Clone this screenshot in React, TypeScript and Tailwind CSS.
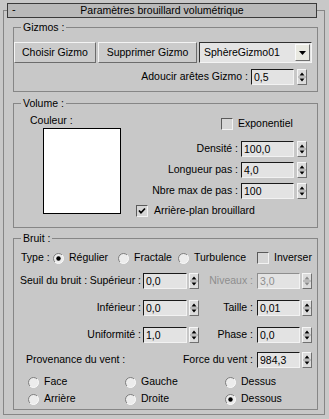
import React from 'react';

function Arrows({ disabled }: { disabled?: boolean }) {
  const c = disabled ? '#8a8a8a' : '#000';
  return (
    <div className="w-[10px] h-[16px] shrink-0 bg-[#dcdcdc] border border-t-[#f6f6f6] border-l-[#f6f6f6] border-b-[#707070] border-r-[#707070] flex">
      <svg width="8" height="14" viewBox="0 0 8 14">
        <path d="M4 2.5 L6.5 5.5 L1.5 5.5 Z" fill={c} />
        <path d="M0 7 H8" stroke="#9a9a9a" strokeWidth="1" />
        <path d="M1.5 8.5 L6.5 8.5 L4 11.5 Z" fill={c} />
      </svg>
    </div>
  );
}

function Spinner({ value, w, gap, disabled }: { value: string; w: string; gap: string; disabled?: boolean }) {
  return (
    <div className={`flex items-center shrink-0 ${gap}`}>
      <div
        className={`${w} h-[16px] border bg-[#e3e3e3] pl-[2px] leading-[14px] border-b-[#f2f2f2] border-r-[#f2f2f2] ${
          disabled ? 'text-[#8e8e8e] border-t-[#8e8e8e] border-l-[#8e8e8e]' : 'border-t-[#1a1a1a] border-l-[#1a1a1a]'
        }`}
      >
        {value}
      </div>
      <Arrows disabled={disabled} />
    </div>
  );
}

function Check({ checked }: { checked?: boolean }) {
  return (
    <div className="w-[12px] h-[12px] shrink-0 bg-[#d6d6d6] border border-t-[#5a5a5a] border-l-[#5a5a5a] border-b-[#f2f2f2] border-r-[#f2f2f2] flex items-center justify-center">
      {checked && (
        <svg width="8" height="8" viewBox="0 0 8 8">
          <path d="M1 3.5 L3 5.8 L7 1.5" stroke="#000" strokeWidth="1.7" fill="none" />
        </svg>
      )}
    </div>
  );
}

function Radio({ checked }: { checked?: boolean }) {
  return (
    <svg width="11" height="11" viewBox="0 0 11 11" className="shrink-0">
      <circle cx="5.5" cy="5.5" r="5" fill="#ececec" />
      <path d="M1.96 9.04 A5 5 0 0 1 9.04 1.96" stroke="#7c7c7c" fill="none" />
      <path d="M9.04 1.96 A5 5 0 0 1 1.96 9.04" stroke="#fafafa" fill="none" />
      {checked && <circle cx="5.5" cy="5.5" r="2.2" fill="#000" />}
    </svg>
  );
}

function RadioOpt({ label, checked, w }: { label: string; checked?: boolean; w: string }) {
  return (
    <div className={`${w} flex items-center gap-[5px] shrink-0`}>
      <Radio checked={checked} />
      <span>{label}</span>
    </div>
  );
}

function Btn({ label, w }: { label: string; w: string }) {
  return (
    <div className={`${w} h-[21px] bg-[#cbcbcb] border border-t-[#f4f4f4] border-l-[#f4f4f4] border-b-[#6c6c6c] border-r-[#6c6c6c] flex items-center justify-center`}>
      {label}
    </div>
  );
}

export default function App() {
  return (
    <div className="w-[329px] h-[419px] overflow-hidden bg-[#c8c8c8] text-[10.5px] text-black font-['Liberation_Sans',Arial,sans-serif] pt-[10px]">
      <div className="ml-[3px] w-[322px] h-[405px] border border-[#868686]">
        {/* rollout title */}
        <div className="relative ml-[3px] -mt-[8px] w-[310px] h-[15px] border border-[#3a3a3a] bg-[#b9b9b9] flex items-center justify-center leading-[13px]">
          <span className="absolute left-[4px] top-0 leading-[11px] text-[11px]">-</span>
          Paramètres brouillard volumétrique
        </div>

        {/* Gizmos */}
        <fieldset className="ml-[9px] mt-[3px] w-[305px] border border-[#868686] pb-[6px]">
          <legend className="ml-[7px] px-[2px] leading-[12px]">Gizmos :</legend>
          <div className="flex mt-[9px] gap-[2px]">
            <Btn label="Choisir Gizmo" w="w-[82px]" />
            <Btn label="Supprimer Gizmo" w="w-[99px]" />
            <div className="w-[113px] h-[21px] bg-[#e4e4e4] border border-t-[#303030] border-l-[#303030] border-b-[#f4f4f4] border-r-[#f4f4f4] flex items-center">
              <span className="flex-1 pl-[4px]">SphèreGizmo01</span>
              <div className="w-[15px] h-[17px] mr-[1px] bg-[#e9e9e1] border border-t-[#fafafa] border-l-[#fafafa] border-b-[#707070] border-r-[#707070] flex items-center justify-center">
                <svg width="7" height="4" viewBox="0 0 7 4">
                  <path d="M0 0 H7 L3.5 4 Z" fill="#000" />
                </svg>
              </div>
            </div>
          </div>
          <div className="flex justify-end items-center mt-[6px] pr-[10px] gap-[3px]">
            <span>Adoucir arêtes Gizmo :</span>
            <Spinner value="0,5" w="w-[43px]" gap="gap-[3px]" />
          </div>
        </fieldset>

        {/* Volume */}
        <fieldset className="ml-[9px] mt-[5px] w-[305px] border border-[#868686] pb-[10px]">
          <legend className="ml-[7px] px-[2px] leading-[12px]">Volume :</legend>
          <div className="flex">
            <div className="w-[122px] shrink-0 pl-[16px] pt-[5px]">
              <div className="leading-[12px]">Couleur :</div>
              <div className="ml-[13px] mt-[2px] w-[78px] h-[86px] bg-white border border-black" />
            </div>
            <div className="flex-1 pr-[10px]">
              <div className="mt-[9px] ml-[85px] h-[12px] flex items-center gap-[5px]">
                <Check />
                <span>Exponentiel</span>
              </div>
              <div className="mt-[11px] flex justify-end items-center gap-[3px]">
                <span>Densité :</span>
                <Spinner value="100,0" w="w-[53px]" gap="gap-[3px]" />
              </div>
              <div className="mt-[5px] flex justify-end items-center gap-[3px]">
                <span>Longueur pas :</span>
                <Spinner value="4,0" w="w-[53px]" gap="gap-[3px]" />
              </div>
              <div className="mt-[5px] flex justify-end items-center gap-[3px]">
                <span>Nbre max de pas :</span>
                <Spinner value="100" w="w-[53px]" gap="gap-[3px]" />
              </div>
              <div className="mt-[6px] h-[12px] flex items-center gap-[6px]">
                <Check checked />
                <span>Arrière-plan brouillard</span>
              </div>
            </div>
          </div>
        </fieldset>

        {/* Bruit */}
        <fieldset className="ml-[9px] mt-[4px] w-[305px] border border-[#868686] pb-[4px]">
          <legend className="ml-[7px] px-[2px] leading-[12px]">Bruit :</legend>
          <div className="mt-[8px] h-[12px] flex items-center pl-[7px]">
            <span className="w-[32px] shrink-0">Type :</span>
            <RadioOpt label="Régulier" checked w="w-[65px]" />
            <RadioOpt label="Fractale" w="w-[60px]" />
            <RadioOpt label="Turbulence" w="w-[79px]" />
            <div className="flex items-center gap-[5px]">
              <Check />
              <span>Inverser</span>
            </div>
          </div>

          <div className="mt-[9px] h-[16px] flex items-center">
            <div className="w-[129px] shrink-0 flex justify-between pl-[6px] pr-[2px]">
              <span>Seuil du bruit :</span>
              <span>Supérieur :</span>
            </div>
            <Spinner value="0,0" w="w-[44px]" gap="gap-[2px]" />
            <div className="w-[58px] shrink-0 text-right pr-[4px] text-[#8e8e8e]">Niveaux :</div>
            <Spinner value="3,0" w="w-[43px]" gap="gap-[2px]" disabled />
          </div>

          <div className="mt-[11px] h-[16px] flex items-center">
            <div className="w-[129px] shrink-0 text-right pr-[2px]">Inférieur :</div>
            <Spinner value="0,0" w="w-[44px]" gap="gap-[2px]" />
            <div className="w-[58px] shrink-0 text-right pr-[4px]">Taille :</div>
            <Spinner value="0,01" w="w-[43px]" gap="gap-[2px]" />
          </div>

          <div className="mt-[11px] h-[16px] flex items-center">
            <div className="w-[129px] shrink-0 text-right pr-[2px]">Uniformité :</div>
            <Spinner value="1,0" w="w-[44px]" gap="gap-[2px]" />
            <div className="w-[58px] shrink-0 text-right pr-[4px]">Phase :</div>
            <Spinner value="0,0" w="w-[43px]" gap="gap-[2px]" />
          </div>

          <div className="mt-[9px] h-[16px] flex items-center pr-[5px]">
            <span className="flex-1 pl-[12px]">Provenance du vent :</span>
            <span className="pr-[4px]">Force du vent :</span>
            <Spinner value="984,3" w="w-[43px]" gap="gap-[2px]" />
          </div>

          <div className="mt-[8px] h-[12px] flex items-center pl-[14px]">
            <RadioOpt label="Face" w="w-[97px]" />
            <RadioOpt label="Gauche" w="w-[100px]" />
            <RadioOpt label="Dessus" w="w-[70px]" />
          </div>
          <div className="mt-[5px] h-[12px] flex items-center pl-[14px]">
            <RadioOpt label="Arrière" w="w-[97px]" />
            <RadioOpt label="Droite" w="w-[100px]" />
            <RadioOpt label="Dessous" checked w="w-[70px]" />
          </div>
        </fieldset>
      </div>
    </div>
  );
}
